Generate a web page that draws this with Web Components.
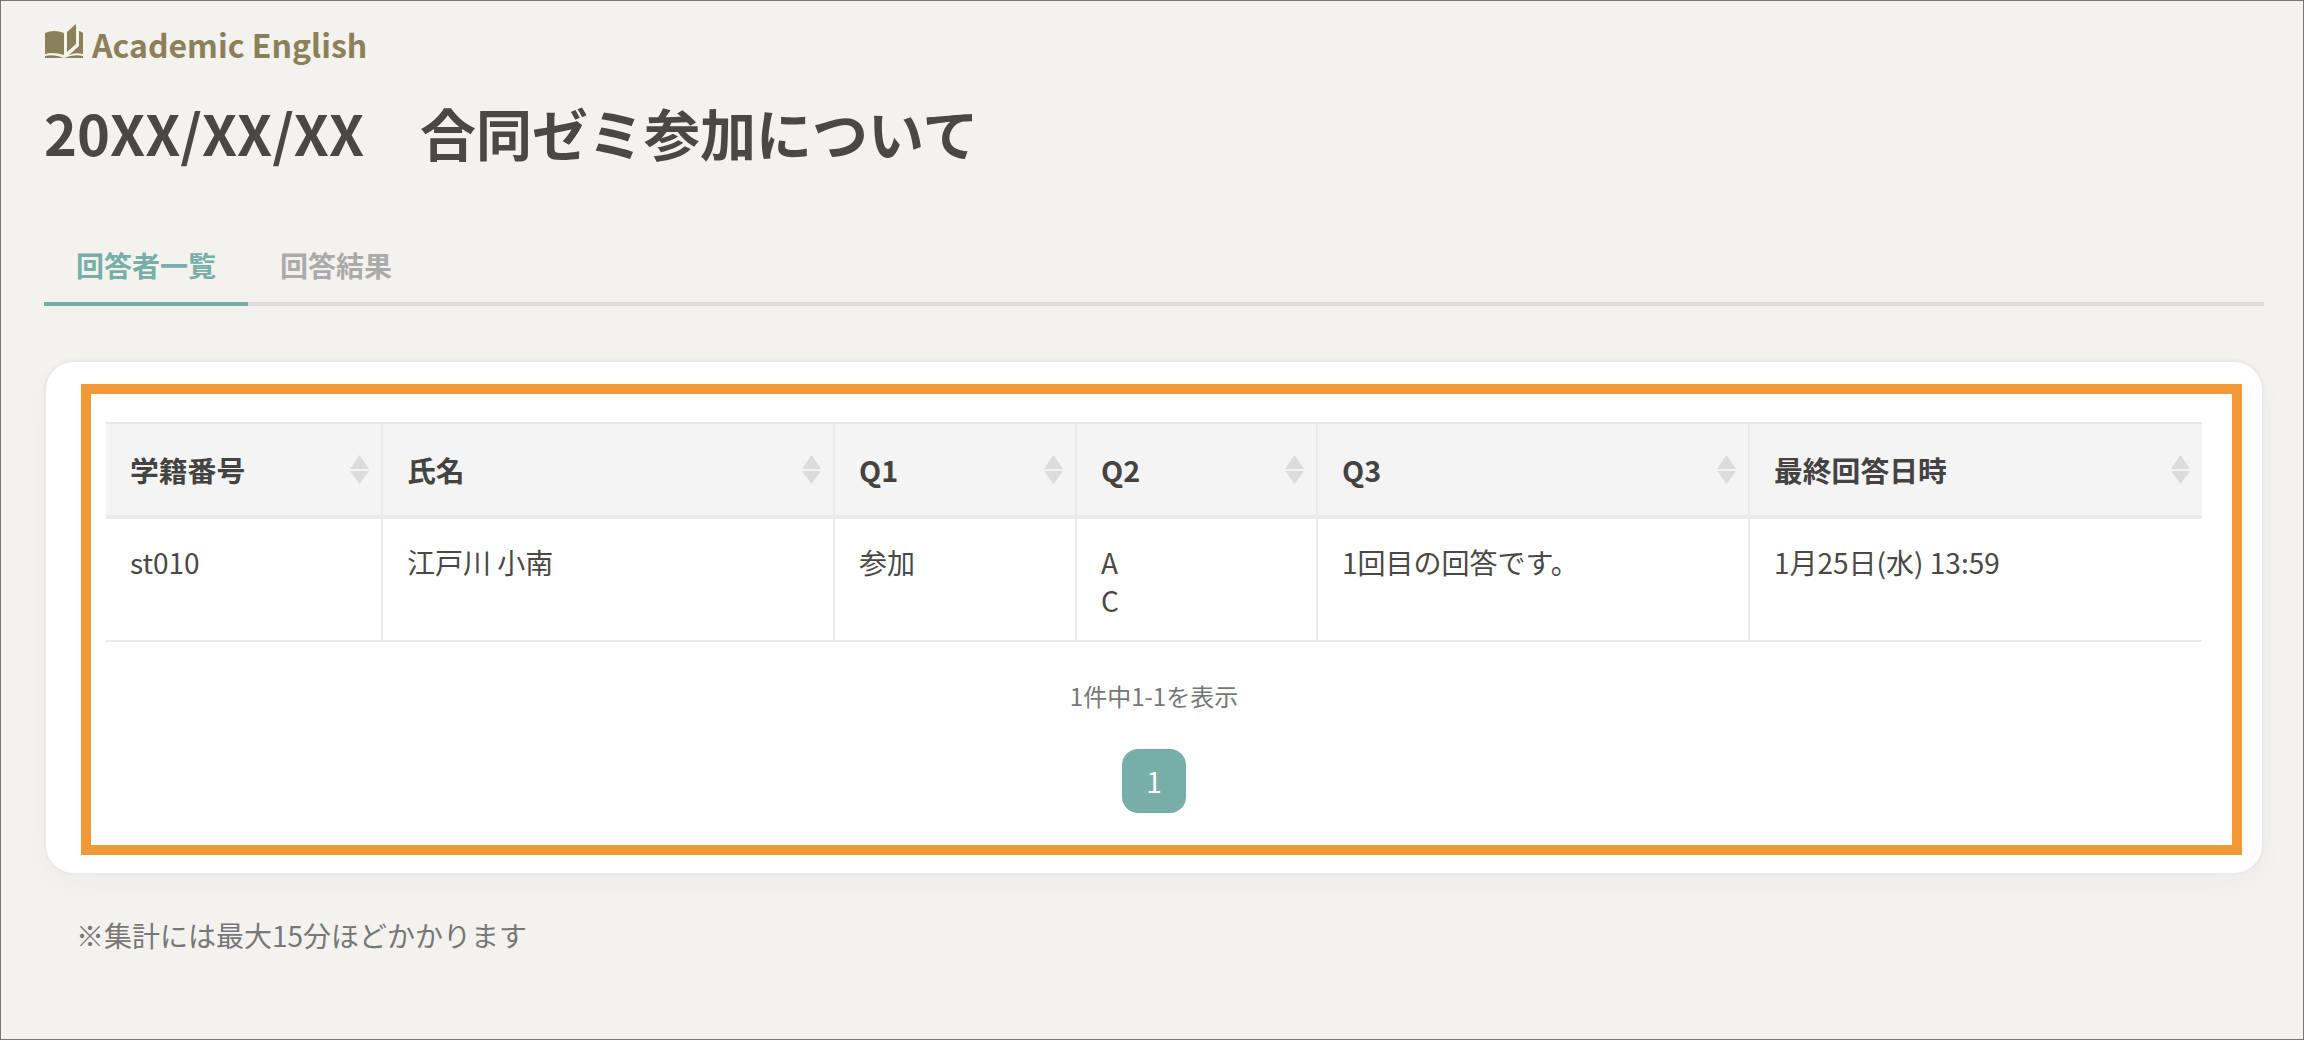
<!DOCTYPE html>
<html lang="ja">
<head>
<meta charset="utf-8">
<title>回答者一覧</title>
<style>
  html, body { margin: 0; background: #f3f2ee; }
  body { font-family: "Noto Sans CJK JP", "Noto Sans", sans-serif; color: #4a4845; }
</style>
</head>
<body>
<survey-page>
  <course-label>Academic English</course-label>
  <page-title>20XX/XX/XX　合同ゼミ参加について</page-title>
  <tab-bar></tab-bar>
  <result-card>
    <answer-table></answer-table>
    <list-pager></list-pager>
  </result-card>
  <page-note>※集計には最大15分ほどかかります</page-note>
</survey-page>

<script>
class SurveyPage extends HTMLElement {
  constructor() {
    super();
    this.attachShadow({ mode: "open" });
    this.shadowRoot.innerHTML = `
      <style>
        :host {
          display: block;
          box-sizing: border-box;
          width: 2304px;
          height: 1040px;
          padding: 18px 39px 0 43px;
          border: 1px solid #777;
          overflow: hidden;
        }
      </style>
      <slot></slot>
    `;
  }
}

class CourseLabel extends HTMLElement {
  constructor() {
    super();
    this.attachShadow({ mode: "open" });
    this.shadowRoot.innerHTML = `
      <style>
        :host {
          display: flex;
          align-items: center;
          gap: 9px;
          height: 50px;
          padding-left: 1px;
          color: #8c8058;
          font-size: 32px;
          font-weight: 700;
          line-height: 50px;
        }
        svg { display: block; flex: none; margin-top: -6px; }
      </style>
      <svg width="38" height="34" viewBox="0 0 38 34" fill="#8c8058">
        <path d="M0 9Q9 5 19 9V31Q9 27.500 0 30Z"/>
        <path d="M31 0L22 8V28L31 20Z"/>
        <path d="M34 7Q36.500 7.500 38 9V30Q30 28 24 31L34 22Z"/>
        <path d="M0 32Q10 30 19 34Q28 30 38 32V34H0Z"/>
      </svg>
      <span><slot></slot></span>
    `;
  }
}

class PageTitle extends HTMLElement {
  constructor() {
    super();
    this.attachShadow({ mode: "open" });
    this.shadowRoot.innerHTML = `
      <style>
        :host {
          display: block;
          margin-top: 27px;
          color: #4a4845;
          font-size: 56px;
          font-weight: 700;
          line-height: 72px;
        }
      </style>
      <slot></slot>
    `;
  }
}

class TabBar extends HTMLElement {
  constructor() {
    super();
    this.attachShadow({ mode: "open" });
    this.shadowRoot.innerHTML = `
      <style>
        :host {
          display: flex;
          margin-top: 67px;
          border-bottom: 4px solid #dddcd7;
          font-size: 28px;
          font-weight: 700;
          line-height: 40px;
        }
        .tab {
          padding: 10px 32px 17px;
          margin-bottom: -4px;
          color: #aaaaaa;
        }
        .tab.active {
          color: #78aea8;
          border-bottom: 4px solid #78aea8;
        }
      </style>
      <div class="tab active">回答者一覧</div>
      <div class="tab">回答結果</div>
    `;
  }
}

class ResultCard extends HTMLElement {
  constructor() {
    super();
    this.attachShadow({ mode: "open" });
    this.shadowRoot.innerHTML = `
      <style>
        :host {
          display: block;
          position: relative;
          box-sizing: border-box;
          margin-top: 54px;
          height: 515px;
          padding: 60px;
          background: #fff;
          border: 2px solid #ebeae6;
          border-radius: 30px;
          box-shadow: 0 0 0 1px #eeede9, 0 10px 30px rgba(0, 0, 0, 0.025);
        }
        /* orange note frame lies over the card */
        .frame {
          position: absolute;
          left: 35px;
          right: 20px;
          top: 22px;
          bottom: 18px;
          border: 10px solid #f19837;
          pointer-events: none;
        }
      </style>
      <slot></slot>
      <div class="frame"></div>
    `;
  }
}

class SortIcon extends HTMLElement {
  constructor() {
    super();
    this.attachShadow({ mode: "open" });
    this.shadowRoot.innerHTML = `
      <style>
        :host { display: block; flex: none; width: 19px; height: 29px; }
        svg { display: block; }
      </style>
      <svg width="19" height="29" viewBox="0 0 19 29" fill="#dcdcdc">
        <path d="M9.500 0L19 14H0Z"/>
        <path d="M0 16H19L9.500 29Z"/>
      </svg>
    `;
  }
}

class AnswerTable extends HTMLElement {
  constructor() {
    super();
    this.attachShadow({ mode: "open" });
    const widths = [277, 452, 242, 241, 432, 452];
    const heads = ["学籍番号", "氏名", "Q1", "Q2", "Q3", "最終回答日時"];
    const row = ["st010", "江戸川 小南", "参加", "A<br>C", "1回目の回答です。", "1月25日(水) 13:59"];
    this.shadowRoot.innerHTML = `
      <style>
        :host { display: block; font-size: 28px; color: #4a4845; }
        table {
          table-layout: fixed;
          width: 2096px;
          border-collapse: separate;
          border-spacing: 0;
        }
        th, td {
          box-sizing: border-box;
          padding: 0;
          border-right: 2px solid #ebebe9;
          text-align: left;
        }
        th:last-child, td:last-child { border-right: 0; }
        th {
          height: 97px;
          background: #f4f4f4;
          border-top: 2px solid #e9e8e4;
          border-bottom: 4px solid #ecebe7;
          font-size: 28.800px;
          font-weight: 700;
          color: #454341;
        }
        .head {
          display: flex;
          align-items: center;
          justify-content: space-between;
          padding: 0 12px 0 24px;
        }
        td {
          height: 123px;
          padding: 24px 24px 21px;
          vertical-align: top;
          border-bottom: 2px solid #ebebe9;
          line-height: 38px;
        }
      </style>
      <table>
        <colgroup>${widths.map((w) => `<col style="width:${w}px">`).join("")}</colgroup>
        <thead>
          <tr>${heads.map((h) => `<th><div class="head"><span>${h}</span><sort-icon></sort-icon></div></th>`).join("")}</tr>
        </thead>
        <tbody>
          <tr>${row.map((c) => `<td>${c}</td>`).join("")}</tr>
        </tbody>
      </table>
    `;
  }
}

class ListPager extends HTMLElement {
  constructor() {
    super();
    this.attachShadow({ mode: "open" });
    this.shadowRoot.innerHTML = `
      <style>
        :host {
          display: flex;
          flex-direction: column;
          align-items: center;
          padding-top: 36px;
        }
        .info { font-size: 24px; line-height: 36px; color: #777; }
        .page {
          display: flex;
          align-items: center;
          justify-content: center;
          width: 64px;
          height: 64px;
          margin-top: 35px;
          border-radius: 16px;
          background: #78aea8;
          color: #fff;
          font-size: 28px;
        }
      </style>
      <div class="info">1件中1-1を表示</div>
      <div class="page">1</div>
    `;
  }
}

class PageNote extends HTMLElement {
  constructor() {
    super();
    this.attachShadow({ mode: "open" });
    this.shadowRoot.innerHTML = `
      <style>
        :host {
          display: block;
          margin-top: 40px;
          padding-left: 32px;
          color: #777;
          font-size: 28px;
          line-height: 40px;
        }
      </style>
      <slot></slot>
    `;
  }
}

customElements.define("survey-page", SurveyPage);
customElements.define("course-label", CourseLabel);
customElements.define("page-title", PageTitle);
customElements.define("tab-bar", TabBar);
customElements.define("result-card", ResultCard);
customElements.define("sort-icon", SortIcon);
customElements.define("answer-table", AnswerTable);
customElements.define("list-pager", ListPager);
customElements.define("page-note", PageNote);
</script>
</body>
</html>
